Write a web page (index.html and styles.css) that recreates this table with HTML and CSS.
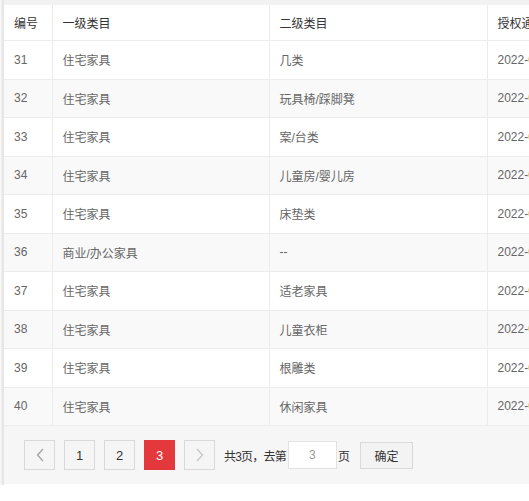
FILE: index.html
```html
<!DOCTYPE html>
<html lang="zh">
<head>
<meta charset="utf-8">
<link rel="stylesheet" href="styles.css">
</head>
<body>
<div class="frame">
  <div class="panel">
    <table class="grid">
      <colgroup>
        <col class="c1"><col class="c2"><col class="c3"><col class="c4">
      </colgroup>
      <thead>
        <tr><th>编号</th><th>一级类目</th><th>二级类目</th><th>授权通过时间</th></tr>
      </thead>
      <tbody>
        <tr><td>31</td><td>住宅家具</td><td>几类</td><td>2022-03-15 10:21:36</td></tr>
        <tr><td>32</td><td>住宅家具</td><td>玩具椅/踩脚凳</td><td>2022-03-15 10:21:36</td></tr>
        <tr><td>33</td><td>住宅家具</td><td>案/台类</td><td>2022-03-15 10:21:36</td></tr>
        <tr><td>34</td><td>住宅家具</td><td>儿童房/婴儿房</td><td>2022-03-15 10:21:36</td></tr>
        <tr><td>35</td><td>住宅家具</td><td>床垫类</td><td>2022-03-15 10:21:36</td></tr>
        <tr><td>36</td><td>商业/办公家具</td><td>--</td><td>2022-03-15 10:21:36</td></tr>
        <tr><td>37</td><td>住宅家具</td><td>适老家具</td><td>2022-03-15 10:21:36</td></tr>
        <tr><td>38</td><td>住宅家具</td><td>儿童衣柜</td><td>2022-03-15 10:21:36</td></tr>
        <tr><td>39</td><td>住宅家具</td><td>根雕类</td><td>2022-03-15 10:21:36</td></tr>
        <tr><td>40</td><td>住宅家具</td><td>休闲家具</td><td>2022-03-15 10:21:36</td></tr>
      </tbody>
    </table>
    <div class="pager">
      <span class="pg pg-arrow"><svg width="8" height="14" viewBox="0 0 8 14"><path d="M7 1 L1.5 7 L7 13" fill="none" stroke="#a0a0a0" stroke-width="1.2"/></svg></span>
      <span class="pg">1</span>
      <span class="pg">2</span>
      <span class="pg pg-on">3</span>
      <span class="pg pg-arrow"><svg width="8" height="14" viewBox="0 0 8 14"><path d="M1 1 L6.5 7 L1 13" fill="none" stroke="#c4c4c4" stroke-width="1.2"/></svg></span>
      <span class="skip skip-tight">共3页，去第</span>
      <span class="goto">3</span>
      <span class="skip">页</span>
      <span class="ok">确定</span>
    </div>
  </div>
</div>
</body>
</html>
```
FILE: styles.css
```css
html, body {
  margin: 0;
  padding: 0;
  background: #fff;
}
body {
  font-family: "Liberation Sans", "Noto Sans CJK SC", sans-serif;
  font-size: 12px;
  color: #555;
}
.frame {
  width: 529px;
  height: 485px;
  overflow: hidden;
  background: #f2f2f2;
  border-left: 1px solid #f6f6f6;
  box-sizing: border-box;
  padding: 5px 0 0 3px;
  position: relative;
}
.frame::before {
  content: "";
  position: absolute;
  left: 1px;
  top: 0;
  width: 2px;
  height: 100%;
  background: #e6e6e6;
}
.panel {
  width: 700px;
  background: #fff;
  height: 480px;
}
.grid {
  border-collapse: collapse;
  table-layout: fixed;
  width: 700px;
}
.c1 { width: 48px; }
.c2 { width: 217px; }
.c3 { width: 218px; }
.c4 { width: 217px; }
.grid th, .grid td {
  text-align: left;
  padding: 0 10px;
  border-right: 1px solid #ececec;
  border-bottom: 1px solid #ececec;
  white-space: nowrap;
  overflow: hidden;
  font-size: 12px;
}
.grid th {
  height: 35px;
  font-weight: normal;
  color: #333;
  background: #fff;
}
.grid td {
  height: 37.5px;
  color: #666;
}
.grid tbody tr:nth-child(even) td {
  background: #f9f9f9;
}
.pager {
  background: #f6f6f6;
  height: 58px;
  display: flex;
  align-items: center;
  padding: 0 0 0 20px;
  color: #333;
}
.pg {
  width: 29px;
  height: 28px;
  border: 1px solid #d9d9d9;
  background: #f5f5f5;
  display: flex;
  align-items: center;
  justify-content: center;
  margin-right: 9px;
  font-size: 13px;
  color: #333;
}
.pg-on {
  background: #e4393c;
  border-color: #e4393c;
  color: #fff;
}
.skip {
  font-size: 12px;
  color: #333;
}
.skip-tight {
  letter-spacing: -0.8px;
}
.goto {
  width: 47px;
  height: 26px;
  border: 1px solid #e2e2e2;
  background: #fff;
  display: flex;
  align-items: center;
  justify-content: center;
  color: #999;
  margin: 0 1px 0 2px;
}
.ok {
  margin-left: 10px;
  width: 51px;
  height: 25px;
  border: 1px solid #d9d9d9;
  background: #f3f3f3;
  display: flex;
  align-items: center;
  justify-content: center;
  font-size: 12px;
  color: #333;
}
```
